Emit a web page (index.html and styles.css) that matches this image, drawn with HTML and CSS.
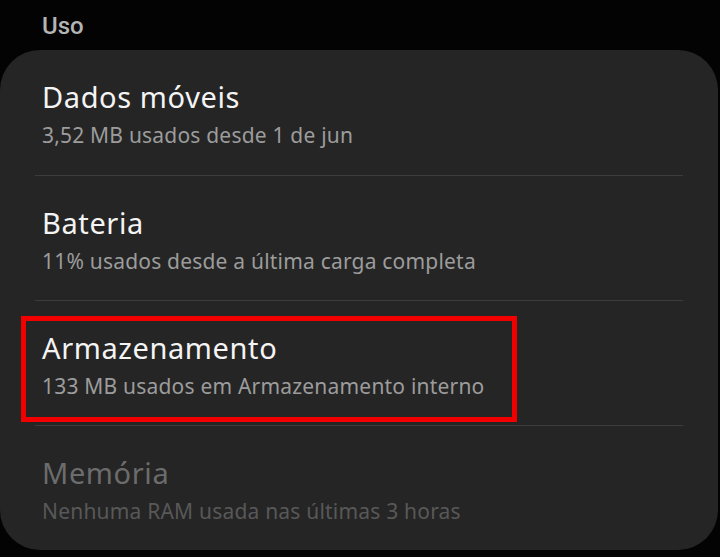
FILE: index.html
```html
<!DOCTYPE html>
<html lang="pt">
<head>
<meta charset="utf-8">
<link rel="stylesheet" href="styles.css">
</head>
<body>
<div class="screen">
  <div class="section-label">Uso</div>
  <div class="card">
    <div class="row">
      <div class="title">Dados móveis</div>
      <div class="sub">3,52 MB usados desde 1 de jun</div>
    </div>
    <div class="divider"></div>
    <div class="row">
      <div class="title">Bateria</div>
      <div class="sub">11% usados desde a última carga completa</div>
    </div>
    <div class="divider"></div>
    <div class="row highlighted">
      <div class="title">Armazenamento</div>
      <div class="sub">133 MB usados em Armazenamento interno</div>
      <div class="mark"></div>
    </div>
    <div class="divider"></div>
    <div class="row disabled">
      <div class="title">Memória</div>
      <div class="sub">Nenhuma RAM usada nas últimas 3 horas</div>
    </div>
  </div>
</div>
</body>
</html>
```
FILE: styles.css
```css
html, body {
  margin: 0;
  padding: 0;
  background: #030303;
}
.screen {
  width: 720px;
  height: 557px;
  overflow: hidden;
  font-family: "Noto Sans", "Open Sans", sans-serif;
}
.section-label {
  height: 50px;
  box-sizing: border-box;
  padding: 12px 0 0 42px;
  font-family: Roboto, "Noto Sans", sans-serif;
  font-size: 24px;
  line-height: 28px;
  font-weight: 500;
  color: #b4b4b4;
}
.card {
  width: 718px;
  height: 500px;
  background: #252525;
  border-radius: 40px;
  display: flex;
  flex-direction: column;
}
.row {
  position: relative;
  height: 125px;
  box-sizing: border-box;
  padding: 30px 0 0 42px;
}
.row:first-child {
  height: 126px;
}
.title {
  font-size: 29px;
  line-height: 34px;
  letter-spacing: 0.6px;
  color: #f4f4f4;
}
.sub {
  margin-top: 7px;
  font-size: 21px;
  line-height: 28px;
  letter-spacing: 0.2px;
  color: #9c9c9c;
}
.disabled .title {
  color: #6c6c6c;
}
.disabled .sub {
  color: #585858;
}
.divider {
  height: 1px;
  margin: 0 35px;
  background: #3c3c3c;
}
.mark {
  position: absolute;
  left: 21px;
  top: 15px;
  width: 496px;
  height: 106px;
  box-sizing: border-box;
  border: 5px solid #f20000;
}
```
